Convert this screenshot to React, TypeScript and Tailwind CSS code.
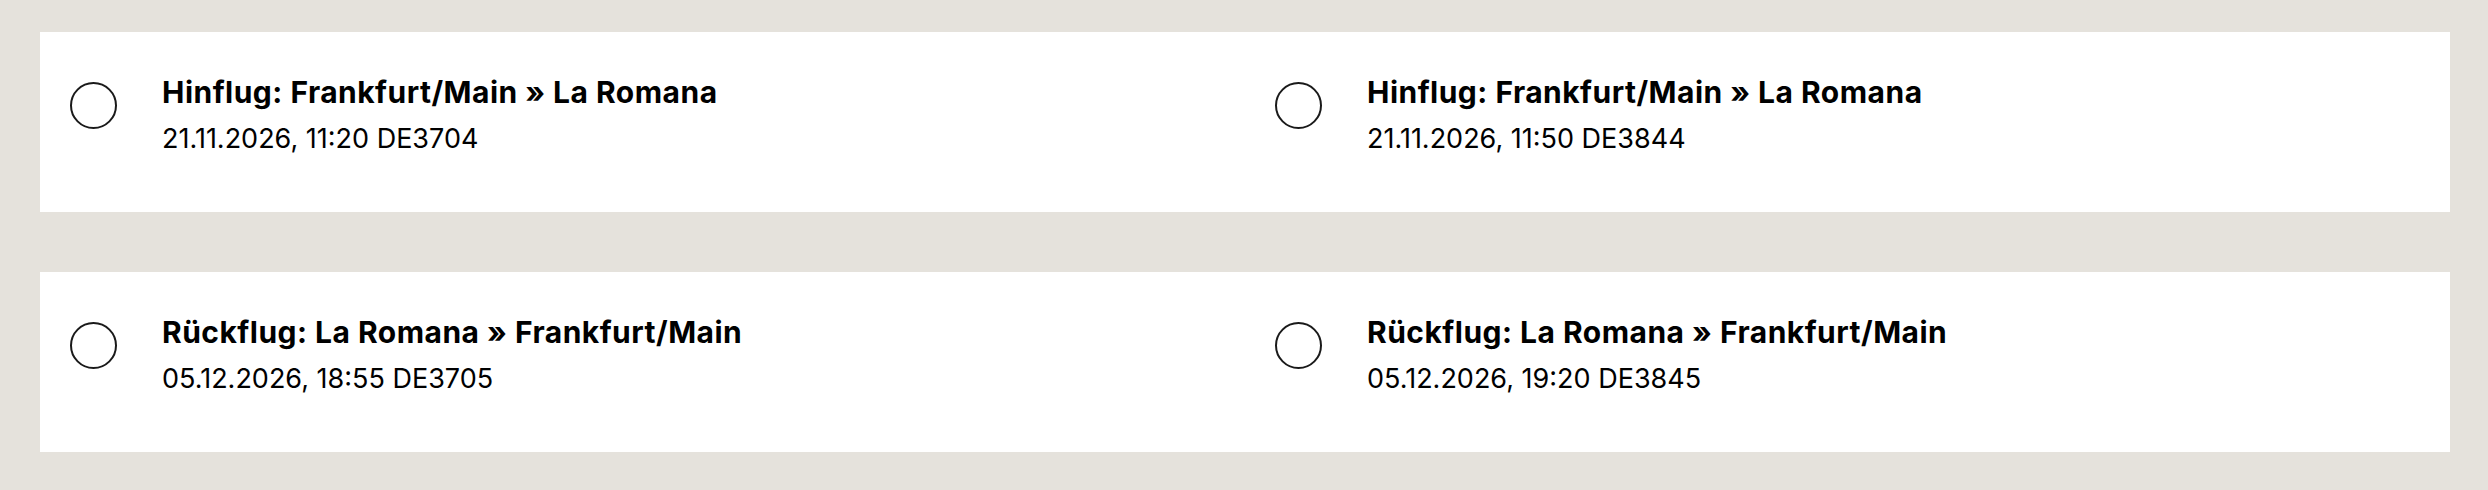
import React from 'react';

type Flight = {
  label: string;
  route: string;
  detail: string;
};

const rows: Flight[][] = [
  [
    { label: 'Hinflug', route: 'Frankfurt/Main » La Romana', detail: '21.11.2026, 11:20 DE3704' },
    { label: 'Hinflug', route: 'Frankfurt/Main » La Romana', detail: '21.11.2026, 11:50 DE3844' },
  ],
  [
    { label: 'Rückflug', route: 'La Romana » Frankfurt/Main', detail: '05.12.2026, 18:55 DE3705' },
    { label: 'Rückflug', route: 'La Romana » Frankfurt/Main', detail: '05.12.2026, 19:20 DE3845' },
  ],
];

function FlightOption({ flight }: { flight: Flight }) {
  return (
    <label className="flex items-start gap-[45px] pl-[30px] pt-[42px] cursor-pointer">
      <span className="block mt-[8px] w-[47px] h-[47px] rounded-full border-2 border-[#1a1a1a] bg-white flex-shrink-0" />
      <span className="flex flex-col">
        <span className="text-[30px] leading-[36px] font-bold text-black tracking-[0.016em]">
          {flight.label}: {flight.route}
        </span>
        <span className="mt-[11px] text-[27px] leading-[36px] text-black">{flight.detail}</span>
      </span>
    </label>
  );
}

export default function App() {
  return (
    <div
      className="min-h-[490px] bg-[#e5e2dc] pt-[32px] pl-[40px] pr-[38px] flex flex-col gap-[60px]"
      style={{ fontFamily: 'Inter, "Noto Sans", sans-serif' }}
    >
      {rows.map((row, i) => (
        <div key={i} className="bg-white h-[180px] grid grid-cols-2">
          {row.map((f, j) => (
            <FlightOption key={j} flight={f} />
          ))}
        </div>
      ))}
    </div>
  );
}
